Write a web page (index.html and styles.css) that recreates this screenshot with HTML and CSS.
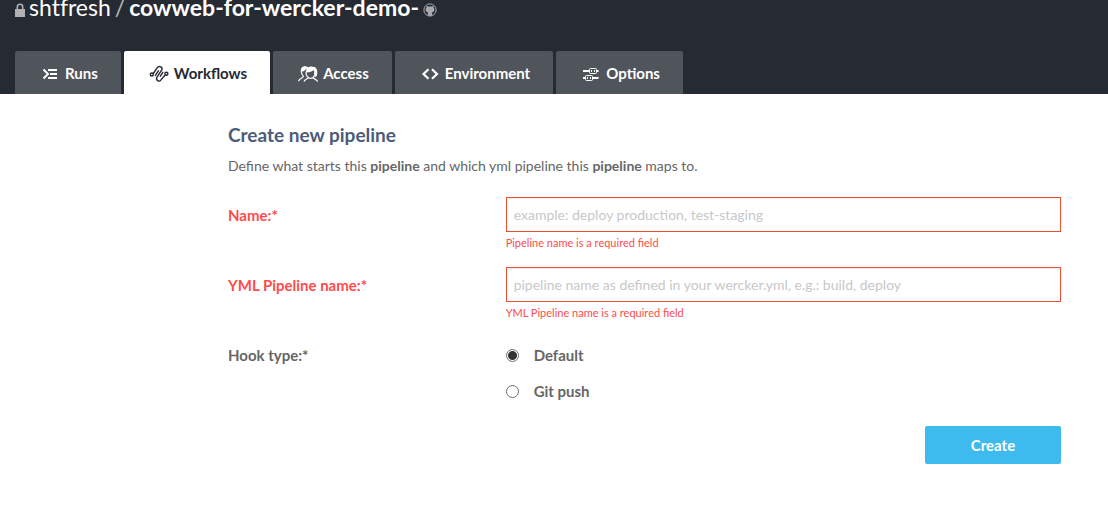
FILE: index.html
```html
<!DOCTYPE html>
<html lang="en">
<head>
<meta charset="utf-8">
<meta name="viewport" content="width=device-width, initial-scale=1">
<title>Create new pipeline</title>
<link rel="stylesheet" href="styles.css">
</head>
<body>
<header class="header">
  <h1 class="repo">
    <svg class="repo-lock" viewBox="0 0 10 14" aria-hidden="true"><path d="M2.3 7V4a2.7 2.7 0 0 1 5.4 0v3" fill="none" stroke="currentColor" stroke-width="1.6"/><path d="M0 6h10v8H0z" fill="currentColor"/></svg>
    <a class="repo-owner" href="#">shtfresh</a>
    <span class="repo-slash">/</span>
    <a class="repo-name" href="#">cowweb-for-wercker-demo-</a>
    <svg class="repo-github" viewBox="0 0 14 14" aria-hidden="true"><circle cx="7" cy="7" r="6.1" fill="none" stroke="currentColor" stroke-width="1"/><path d="M3.600 2.800 5.400 3.500h3.200l1.800-.7.2 1.800c.6.7.8 1.400.7 2.300-.1 1.500-1.200 2.200-2.500 2.400.4.5.4 1 .4 1.600v1.600L7 13l-2.200-.5V11c0-.7 0-1.200.4-1.700-1.300-.2-2.400-.9-2.500-2.400-.1-.9.1-1.600.7-2.300z" fill="currentColor"/></svg>
  </h1>
  <nav class="tabs">
    <a class="tab" href="#"><svg class="tab-icon" viewBox="0 0 22 22" aria-hidden="true"><path d="M4.500 7.500 9 12l-4.500 4.500M9 8h9M11 12h7M9 16h9" fill="none" stroke="currentColor" stroke-width="1.900"/></svg>Runs</a>
    <a class="tab tab-active" href="#" aria-current="page"><svg class="tab-icon" viewBox="0 0 22 22" aria-hidden="true"><g fill="none" stroke="currentColor" stroke-width="1.400" stroke-linecap="round"><circle cx="3.800" cy="12.500" r="1.500"/><circle cx="18.400" cy="11.800" r="1.500"/><path d="M5.300 11.500 9.300 5.700c2-2.700 5.900-.3 4.300 2.500L9 15.200c-1.700 2.800 2 5.400 4 2.700l4.200-4.900M7.400 13.400l3-4.600M12.300 14.200l2.500-3.900"/></g></svg>Workflows</a>
    <a class="tab" href="#"><svg class="tab-icon" viewBox="0 0 22 22" aria-hidden="true"><g fill="none" stroke="currentColor" stroke-width="1.200" stroke-linecap="round" stroke-linejoin="round"><path d="M10.500 5.700C7.300 3.500 3.900 5.500 4.300 9.500c.2 2.100.9 3.600 2 4.700-.1 1.700-3.100 1.700-4.700 4.600M7.200 19.200c.8-2.200 3.600-2.200 4.100-3.700-2.400-2.200-2.600-5.100-1.600-7.100M16.200 15.400c.2 1.700 3.300 1.700 4.200 3.800M11.300 15.500c1.600 1.100 3.300 1.100 4.900-.1 1.600-1.500 2-3.500 1.500-5.800"/></g><path d="M4 9.500c-.5-4.200 3.700-6.200 6.900-4.100L8.500 7.800 6.200 9.600zM9.400 10.500c-.7-4.400 2.400-6.600 6-5.800 4.400-.6 5.900 4.500 4.300 9.300l-1.800 1.300.2-5-1.300-2-3.600 1.700z" fill="currentColor"/></svg>Access</a>
    <a class="tab" href="#"><svg class="tab-icon" viewBox="0 0 22 22" aria-hidden="true"><path d="m9.500 7.200-5 4.800 5 4.800M13 7.200l5 4.800-5 4.800" fill="none" stroke="currentColor" stroke-width="2.200"/></svg>Environment</a>
    <a class="tab" href="#"><svg class="tab-icon" viewBox="0 0 22 22" aria-hidden="true"><g fill="none" stroke="currentColor"><path d="M3 9h6M16 9h2.500M3 16h2M13 16h5.500" stroke-width="2"/><rect x="9.500" y="6.500" width="7" height="5" rx="1"/><rect x="5.500" y="13.500" width="7" height="5" rx="1"/><path d="M11.500 8v2M14.500 8v2M7.500 15v2M10.500 15v2" stroke-width="1"/></g></svg>Options</a>
  </nav>
</header>
<main class="content">
  <h2 class="title">Create new pipeline</h2>
  <p class="intro">Define what starts this <strong>pipeline</strong> and which yml pipeline this <strong>pipeline</strong> maps to.</p>
  <form class="form">
    <div class="row">
      <label class="label label-error" for="name">Name:*</label>
      <div class="field">
        <input class="input" id="name" type="text" placeholder="example: deploy production, test-staging" aria-describedby="name-error">
        <p class="error" id="name-error">Pipeline name is a required field</p>
      </div>
    </div>
    <div class="row">
      <label class="label label-error" for="yml">YML Pipeline name:*</label>
      <div class="field">
        <input class="input" id="yml" type="text" placeholder="pipeline name as defined in your wercker.yml, e.g.: build, deploy" aria-describedby="yml-error">
        <p class="error" id="yml-error">YML Pipeline name is a required field</p>
      </div>
    </div>
    <div class="row" role="radiogroup" aria-labelledby="hook-label">
      <span class="label" id="hook-label">Hook type:*</span>
      <div class="options">
        <label class="option"><input class="radio" type="radio" name="hook" checked>Default</label>
        <label class="option"><input class="radio" type="radio" name="hook">Git push</label>
      </div>
    </div>
    <div class="actions"><button class="button" type="submit">Create</button></div>
  </form>
</main>
</body>
</html>
```

FILE: styles.css
```css
* { box-sizing: border-box; }
body {
  margin: 0;
  background: #fff;
  color: #666;
  font: 14px/20px Lato, "Open Sans", sans-serif;
}
h1, h2, p { margin: 0; }
a { color: inherit; text-decoration: none; }
.header {
  padding: 0 15px;
  background: #262a33;
  color: #fff;
  overflow: hidden;
}
.repo {
  display: flex;
  align-items: center;
  gap: 4px;
  margin-top: -7px;
  margin-bottom: 30px;
  font-size: 23px;
  line-height: 28px;
  font-weight: 400;
  font-variant-ligatures: none;
}
.repo-lock { width: 10px; height: 14px; margin-top: 6px; color: #aeb0b4; }
.repo-slash { color: #b4b6ba; }
.repo-name { font-weight: 700; }
.repo-github { width: 14px; height: 14px; margin-top: 6px; color: #a8aaae; }
.tabs { display: flex; gap: 3px; }
.tab {
  display: flex;
  align-items: center;
  gap: 4px;
  height: 43px;
  padding: 0 23px 0 24px;
  border-radius: 2px 2px 0 0;
  background: #50545b;
  font-size: 15px;
  font-weight: 700;
}
.tab-active { background: #fff; color: #262a33; }
.tab-icon { width: 22px; height: 22px; }
.content { padding: 30px 47px 46px 228px; }
.title {
  color: #4c5b7a;
  font-size: 19px;
  line-height: 22px;
  font-weight: 700;
}
.intro { margin-top: 10px; }
.form { margin-top: 21px; }
.row {
  display: grid;
  grid-template-columns: 1fr 2fr;
  margin-bottom: 17px;
}
.label { padding-top: 8px; font-size: 15px; font-weight: 700; }
.label-error { color: #ff4b4b; }
.input {
  display: block;
  width: 100%;
  height: 35px;
  padding: 0 7px;
  border: 1px solid #ea4f32;
  border-radius: 0;
  background: #fff;
  box-shadow: inset 0 1px 1px rgba(0, 0, 0, 0.08);
  color: #666;
  font: inherit;
}
.input::placeholder { color: #c8c8c8; opacity: 1; }
.error {
  margin-top: 4px;
  color: #ff4b4b;
  font-size: 11px;
  line-height: 14px;
}
.options { display: grid; gap: 16px; padding-top: 8px; }
.option {
  display: flex;
  align-items: center;
  gap: 15px;
  font-size: 15px;
  font-weight: 700;
}
.radio {
  appearance: none;
  width: 13px;
  height: 13px;
  margin: 0;
  border: 1px solid #707070;
  border-radius: 50%;
  background: #fff;
}
.radio:checked { background: radial-gradient(circle, #333 4px, #fff 5px); }
.actions { display: flex; justify-content: flex-end; margin-top: 25px; }
.button {
  width: 136px;
  height: 38px;
  border: 0;
  border-radius: 2px;
  background: #3dbbee;
  color: #fff;
  font: inherit;
  font-size: 15px;
  font-weight: 700;
}
```
